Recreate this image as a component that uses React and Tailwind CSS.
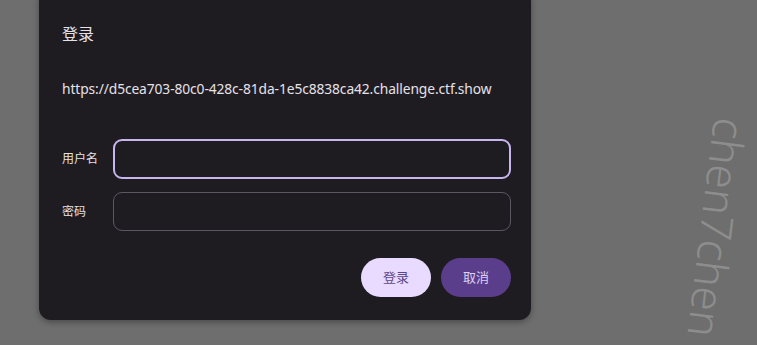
export default function App() {
  return (
    <div
      className="relative w-[757px] h-[345px] overflow-hidden bg-[#6e6e6e]"
      style={{ fontFamily: '"Noto Sans", "Noto Sans CJK SC", sans-serif' }}
    >
      <div className="ml-[39px] mt-[-12px] w-[492px] h-[332px] rounded-[12px] bg-[#1f1c21] shadow-[0_2px_6px_rgba(0,0,0,0.35)] pl-[23px] pr-[20px] pt-[34px] flex flex-col">
        <h2 className="text-[16px] leading-[24px] text-[#e6e1e8]">登录</h2>
        <p className="mt-[33px] text-[13.8px] leading-[20px] text-[#e6e1e8] tracking-[-0.1px] whitespace-nowrap">
          https://d5cea703-80c0-428c-81da-1e5c8838ca42.challenge.ctf.show
        </p>
        <div className="mt-[40px] flex flex-col gap-[13px]">
          <div className="flex items-center">
            <label className="w-[51px] text-[12px] text-[#e6e1e8]">用户名</label>
            <div className="w-[398px] h-[40px] rounded-[9px] border-2 border-[#c7b5f0]" />
          </div>
          <div className="flex items-center">
            <label className="w-[51px] text-[12px] text-[#e6e1e8]">密码</label>
            <div className="w-[398px] h-[39px] rounded-[9px] border border-[#5b5760]" />
          </div>
        </div>
        <div className="mt-[27px] flex justify-end gap-[10px]">
          <button className="w-[70px] h-[39px] rounded-full bg-[#e9dbff] text-[13px] text-[#5c4687]">登录</button>
          <button className="w-[70px] h-[39px] rounded-full bg-[#5a3e8c] text-[13px] text-[#ddd0f2]">取消</button>
        </div>
      </div>
      <div className="absolute left-[714px] top-[121px] origin-top-left rotate-[97deg] translate-x-[39px] text-[44px] leading-[44px] font-light text-[#8d8d8d] whitespace-nowrap">
        chen7chen
      </div>
    </div>
  );
}
